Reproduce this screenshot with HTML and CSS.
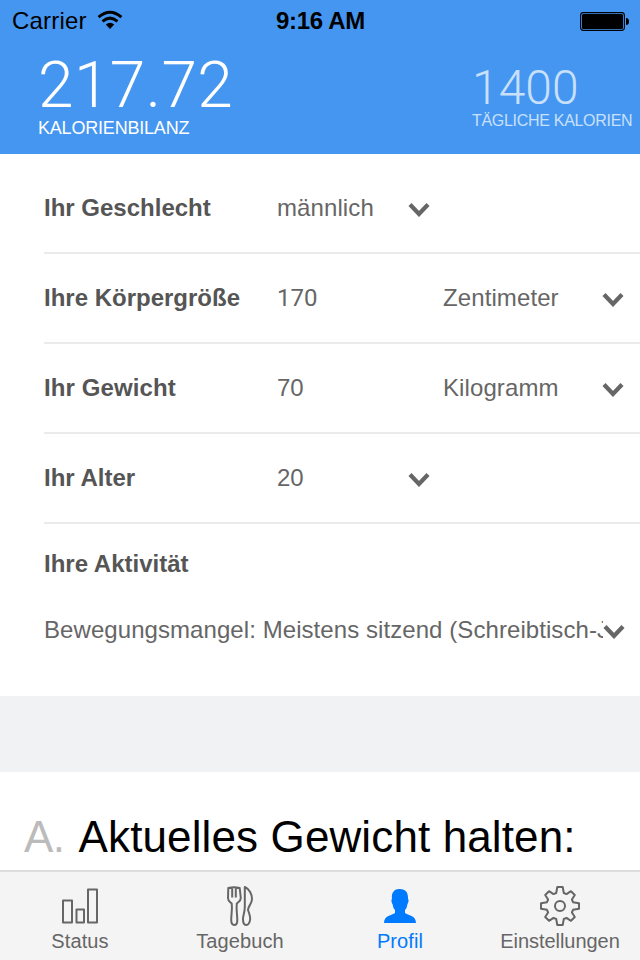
FILE: index.html
```html
<!DOCTYPE html>
<html lang="de">
<head>
<meta charset="utf-8">
<title>Profil</title>
<link rel="stylesheet" href="styles.css">
</head>
<body>
<header class="header">
  <div class="statusbar">
    <div class="carrier"><span>Carrier</span>
      <svg class="wifi" width="26" height="20" viewBox="0 0 26 20"><g fill="none" stroke="#000" stroke-width="3"><path d="M1.6 7.2Q13-2.8 24.4 7.2"/><path d="M5.5 11.3Q13 5 20.5 11.3"/></g><path d="M8.8 14.5Q13 11.2 17.2 14.5L13 19Z"/></svg>
    </div>
    <div class="time">9:16 AM</div>
    <svg class="battery" width="49" height="19" viewBox="0 0 49 19"><rect x=".6" y=".6" width="43.8" height="17.8" rx="2.8" fill="none" stroke="#000" stroke-width="1.1"/><rect x="2" y="2" width="41" height="15" rx="1.5"/><path d="M46 6q3 0 3 3.5t-3 3.5Z"/></svg>
  </div>
  <div class="totals">
    <div class="balance"><div class="balance-value">217.72</div><div class="balance-label">KALORIENBILANZ</div></div>
    <div class="daily"><div class="daily-value">1400</div><div class="daily-label">TÄGLICHE KALORIEN</div></div>
  </div>
</header>
<main>
  <section class="form">
    <div class="row first"><b>Ihr Geschlecht</b><span class="wide">männlich</span><svg class="chev" viewBox="0 0 22 15"><path d="M2 2.5L11 12L20 2.5"/></svg></div>
    <div class="row"><b>Ihre Körpergröße</b><span class="num">170</span><i></i><span class="wide">Zentimeter</span><svg class="chev" viewBox="0 0 22 15"><path d="M2 2.5L11 12L20 2.5"/></svg></div>
    <div class="row"><b class="wide">Ihr Gewicht</b><span>70</span><i></i><span class="wide">Kilogramm</span><svg class="chev" viewBox="0 0 22 15"><path d="M2 2.5L11 12L20 2.5"/></svg></div>
    <div class="row"><b>Ihr Alter</b><span>20</span><svg class="chev" viewBox="0 0 22 15"><path d="M2 2.5L11 12L20 2.5"/></svg></div>
    <div class="activity"><b>Ihre Aktivität</b>
      <div class="select"><span>Bewegungsmangel: Meistens sitzend (Schreibtisch-Job)</span><svg class="chev" viewBox="0 0 22 15"><path d="M2 2.5L11 12L20 2.5"/></svg></div>
    </div>
  </section>
  <h1 class="plan"><span>A.</span><strong>Aktuelles Gewicht halten:</strong></h1>
</main>
<nav class="tabs">
  <div class="tab"><svg viewBox="-22 -22 44 44"><path d="M-17-5.5h9v22h-9ZM-3.5 3.5h7.5v13h-7.5ZM8-16.5h9v33h-9Z"/></svg><span>Status</span></div>
  <div class="tab"><svg viewBox="-22 -22 44 44"><path d="M-11.7-18Q-6-19.5-.3-18L.8-8C.8-5-1-4.5-3.2-2.5C-4 4-2.7 8-2.7 14Q-2.7 19-5.7 19T-8.8 14C-8.8 8-7.5 4-8.3-2.5C-10.5-4.5-12-5-12-8ZM-7.8-18V-8.5M-4.2-18V-8.5"/><path d="M4.8-19C9.5-17 12-11.5 12-7C12-2 8 0 8 4C9.5 8 10.2 10 10.2 13Q9.5 19 6.2 19T3 13C3 9 4.8 7 4.8 1Z"/></svg><span>Tagebuch</span></div>
  <div class="tab active"><svg viewBox="-22 -22 44 44"><path class="solid" d="M-1-17C5-17.5 8.5-14 8-7C9-6.5 8.5-3 7.5-2Q7 2 5 4V7C8 9.5 16 9 16 17H-16C-16 9-8 9.5-5 7V4Q-7 2-7.5-2C-8.5-3-9-6.5-8-7C-9-14-5-17-1-17Z"/></svg><span>Profil</span></div>
  <div class="tab"><svg viewBox="-22 -22 44 44"><path d="M-2.7-19H2.7L3.8-13L6.5-11.9L11-14.8L14.8-11L11.9-6.5L13-3.8L19-2.7V2.7L13 3.8L11.9 6.5L14.8 11L11 14.8L6.5 11.9L3.8 13L2.7 19H-2.7L-3.8 13L-6.5 11.9L-11 14.8L-14.8 11L-11.9 6.5L-13 3.8L-19 2.7V-2.7L-13-3.8L-11.9-6.5L-14.8-11L-11-14.8L-6.5-11.9L-3.8-13Z"/><circle r="5"/></svg><span class="t-settings">Einstellungen</span></div>
</nav>
</body>
</html>
```
FILE: styles.css
```css
* { box-sizing: border-box; }
body {
  margin: 0;
  width: 640px;
  height: 960px;
  overflow: hidden;
  display: flex;
  flex-direction: column;
  background: #fff;
  font-family: "Liberation Sans", Arial, sans-serif;
  color: #666;
}
svg { display: block; flex: none; }
.header { height: 154px; background: #4596f1; flex: none; }
.statusbar {
  display: grid;
  grid-template-columns: 1fr 100px 1fr;
  height: 40px;
  align-items: center;
  padding: 2px 11px 0 12px;
  color: #000;
  font-size: 24px;
}
.carrier { display: flex; align-items: center; gap: 10px; }
.carrier span { letter-spacing: .2px; }
.wifi { margin-top: -2px; }
.time { font-weight: bold; text-align: center; white-space: nowrap; letter-spacing: -.3px; }
.battery { justify-self: end; }
.totals { display: flex; justify-content: space-between; padding: 13px 0 0 38px; color: #fff; }
.balance-value { font-family: Roboto, "Liberation Sans", sans-serif; font-weight: 300; font-size: 64px; line-height: 65px; letter-spacing: .4px; }
.balance-label { font-size: 18px; line-height: 20px; white-space: nowrap; letter-spacing: -.2px; }
.daily { width: 168px; padding-top: 9px; color: #c8e0fb; }
.daily-value { font-family: Roboto, "Liberation Sans", sans-serif; font-weight: 300; font-size: 48px; line-height: 51px; }
.daily-label { font-size: 16px; line-height: 16px; white-space: nowrap; letter-spacing: -.3px; }
main { flex: 1; min-height: 0; overflow: hidden; }
.form { height: 542px; padding-left: 44px; font-size: 24px; }
.row {
  display: grid;
  grid-template-columns: 233px 131px 35px 159px 22px;
  align-items: center;
  height: 90px;
  border-bottom: 2px solid #ebebeb;
  white-space: nowrap;
}
.row.first { height: 100px; padding-top: 10px; }
.wide { letter-spacing: .1px; }
.num { font-family: Roboto, "Liberation Sans", sans-serif; }
b { color: #555; }
.chev { width: 22px; height: 15px; fill: none; stroke: #666; stroke-width: 4.2; margin-top: 3px; }
.activity { padding-top: 26px; }
.activity b { display: block; line-height: 28px; }
.select { display: flex; margin-top: 38px; line-height: 28px; align-items: center; }
.select span { width: 559px; overflow: hidden; white-space: nowrap; letter-spacing: .07px; }
.plan {
  display: flex;
  gap: 14px;
  margin: 0;
  height: 174px;
  border-top: 76px solid #f1f2f4;
  padding: 39px 0 0 24px;
  font-size: 44px;
  line-height: 52px;
  white-space: nowrap;
}
.plan span { font-weight: normal; color: #bbb; letter-spacing: -.5px; }
.plan strong { font-weight: normal; color: #000; letter-spacing: .12px; }
.tabs {
  display: grid;
  grid-template-columns: repeat(4, 160px);
  height: 90px;
  flex: none;
  background: #f4f4f4;
  border-top: 2px solid #ddd;
  font-size: 20px;
}
.tab { display: flex; flex-direction: column; align-items: center; padding-top: 12px; }
.tab svg { width: 44px; height: 44px; fill: none; stroke: #666; stroke-width: 2; stroke-linejoin: round; }
.tab span { line-height: 24px; margin-top: 1px; letter-spacing: .1px; }
.tab .t-settings { letter-spacing: -.05px; }
.tab.active { color: #007aff; }
.tab .solid { fill: #007aff; stroke: none; }
```
